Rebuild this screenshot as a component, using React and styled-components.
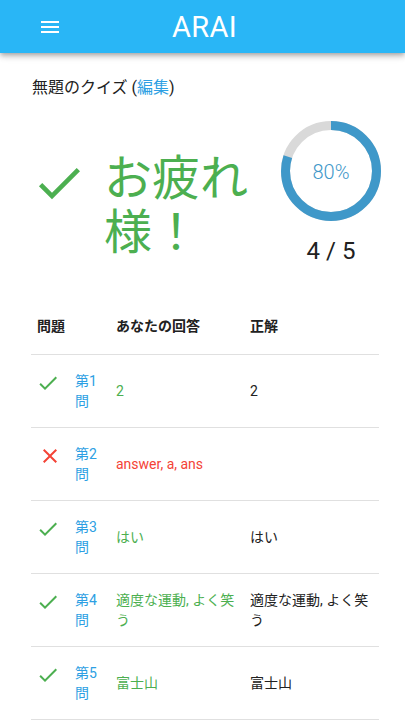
import React from "react";
import styled, { createGlobalStyle } from "styled-components";

const GlobalStyle = createGlobalStyle`
  body {
    margin: 0;
    background: #fff;
    font-family: Roboto, "Noto Sans CJK JP", sans-serif;
    color: #212121;
  }
`;

const AppBar = styled.header`
  height: 53px;
  background: #29b6f6;
  display: grid;
  grid-template-columns: 1fr auto 1fr;
  align-items: center;
  box-shadow: 0 2px 4px -1px rgba(0, 0, 0, 0.2), 0 4px 5px 0 rgba(0, 0, 0, 0.14),
    0 1px 10px 0 rgba(0, 0, 0, 0.12);
`;

const MenuButton = styled.button`
  justify-self: start;
  margin-left: 38px;
  padding: 0;
  border: 0;
  background: none;
  width: 24px;
  height: 24px;
  display: flex;
  color: #fff;
`;

const BrandTitle = styled.div`
  color: #fff;
  font-size: 29px;
  font-weight: 400;
  letter-spacing: 0.3px;
  padding-left: 4px;
`;

const Main = styled.main`
  padding: 23px 26px 0 31px;
`;

const QuizTitle = styled.div`
  font-size: 16px;
  line-height: 24px;
  padding-left: 1px;
`;

const EditLink = styled.a`
  color: #2d9fe3;
  text-decoration: none;
`;

const Hero = styled.section`
  display: flex;
  margin-top: 21px;
`;

const ResultGroup = styled.div`
  flex: 1;
  display: flex;
  align-items: flex-start;
`;

const BigIcon = styled.svg`
  width: 56px;
  height: 56px;
  margin-top: 34px;
  flex: none;
  fill: #4caf50;
`;

const Message = styled.div`
  margin: 31px 0 0 17px;
  width: 160px;
  font-size: 48px;
  font-weight: 400;
  line-height: 54px;
  color: #4caf50;
`;

const ScoreGroup = styled.div`
  width: 100px;
  display: flex;
  flex-direction: column;
  align-items: center;
  margin-right: -2px;
`;

const Ring = styled.div`
  position: relative;
  width: 100px;
  height: 100px;
`;

const RingLabel = styled.div`
  position: absolute;
  inset: 0;
  display: flex;
  align-items: center;
  justify-content: center;
  font-size: 20px;
  font-weight: 300;
  color: #3f98c9;
  padding-top: 1px;
`;

const Score = styled.div`
  margin-top: 16px;
  font-size: 24px;
  line-height: 28px;
  color: #212121;
`;

const Table = styled.table`
  margin-top: 33px;
  width: 100%;
  border-collapse: collapse;
  font-size: 14px;
`;

const HeadCell = styled.th`
  text-align: left;
  font-weight: 700;
  line-height: 24px;
  padding: 16px 0 16px ${(p) => p.$indent || 0}px;
  border-bottom: 1px solid #e0e0e0;
  color: #212121;
`;

const Cell = styled.td`
  padding: 16px ${(p) => p.$right || 0}px 16px ${(p) => p.$left || 0}px;
  line-height: 20px;
  vertical-align: ${(p) => (p.$top ? "top" : "middle")};
  border-bottom: 1px solid #e0e0e0;
  color: ${(p) => p.$color || "#212121"};
`;

const StatusIcon = styled.svg`
  display: block;
  width: 24px;
  height: 24px;
  margin-left: ${(p) => (p.$wrong ? 2 : 0)}px;
  fill: ${(p) => (p.$wrong ? "#f44336" : "#4caf50")};
`;

const CHECK = "M9 16.17L4.83 12l-1.42 1.41L9 19 21 7l-1.41-1.41z";
const CLOSE =
  "M19 6.41L17.59 5 12 10.59 6.41 5 5 6.41 10.59 12 5 17.59 6.41 19 12 13.41 17.59 19 19 17.59 13.41 12z";

const results = [
  { no: 1, ok: true, answer: "2", correct: "2" },
  { no: 2, ok: false, answer: "answer, a, ans", correct: "" },
  { no: 3, ok: true, answer: "はい", correct: "はい" },
  { no: 4, ok: true, answer: "適度な運動, よく笑う", correct: "適度な運動, よく笑う" },
  { no: 5, ok: true, answer: "富士山", correct: "富士山" },
];

const ProgressRing = ({ percent }) => {
  const r = 45.5;
  const c = 2 * Math.PI * r;
  return (
    <Ring>
      <svg width="100" height="100" viewBox="0 0 100 100">
        <circle cx="50" cy="50" r={r} fill="none" stroke="#d9d9d9" strokeWidth="9" />
        <circle
          cx="50"
          cy="50"
          r={r}
          fill="none"
          stroke="#3f98c9"
          strokeWidth="9"
          strokeDasharray={`${(c * percent) / 100} ${c}`}
          transform="rotate(-90 50 50)"
        />
      </svg>
      <RingLabel>{percent}%</RingLabel>
    </Ring>
  );
};

const App = () => {
  const right = results.filter((r) => r.ok).length;
  const percent = Math.round((right / results.length) * 100);

  return (
    <>
      <GlobalStyle />
      <AppBar>
        <MenuButton aria-label="menu">
          <svg width="24" height="24" viewBox="0 0 24 24" fill="currentColor">
            <path d="M3 18h18v-2H3v2zm0-5h18v-2H3v2zm0-7v2h18V6H3z" />
          </svg>
        </MenuButton>
        <BrandTitle>ARAI</BrandTitle>
        <div />
      </AppBar>
      <Main>
        <QuizTitle>
          無題のクイズ (<EditLink href="#">編集</EditLink>)
        </QuizTitle>
        <Hero>
          <ResultGroup>
            <BigIcon viewBox="0 0 24 24">
              <path d={CHECK} />
            </BigIcon>
            <Message>お疲れ様！</Message>
          </ResultGroup>
          <ScoreGroup>
            <ProgressRing percent={percent} />
            <Score>
              {right} / {results.length}
            </Score>
          </ScoreGroup>
        </Hero>
        <Table>
          <colgroup>
            <col style={{ width: 44 }} />
            <col style={{ width: 41 }} />
            <col style={{ width: 134 }} />
            <col />
          </colgroup>
          <thead>
            <tr>
              <HeadCell colSpan={2} $indent={6}>
                問題
              </HeadCell>
              <HeadCell>あなたの回答</HeadCell>
              <HeadCell>正解</HeadCell>
            </tr>
          </thead>
          <tbody>
            {results.map((r) => (
              <tr key={r.no}>
                <Cell $top $left={5}>
                  <StatusIcon viewBox="0 0 24 24" $wrong={!r.ok}>
                    <path d={r.ok ? CHECK : CLOSE} />
                  </StatusIcon>
                </Cell>
                <Cell $right={10} $color="#2d9fe3">
                  第{r.no}問
                </Cell>
                <Cell $right={8} $color={r.ok ? "#4caf50" : "#f44336"}>
                  {r.answer}
                </Cell>
                <Cell>{r.correct}</Cell>
              </tr>
            ))}
          </tbody>
        </Table>
      </Main>
    </>
  );
};

export default App;
